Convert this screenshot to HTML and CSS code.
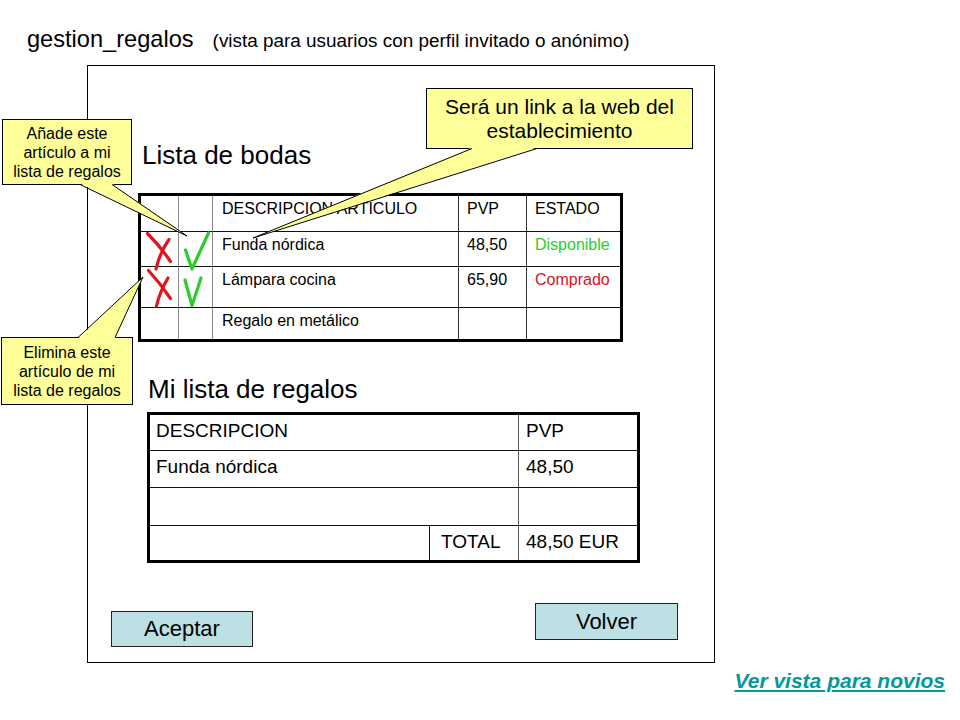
FILE: index.html
```html
<!DOCTYPE html>
<html lang="es">
<head>
<meta charset="utf-8">
<title>gestion_regalos</title>
<link rel="stylesheet" href="styles.css">
</head>
<body>
<div class="page">
  <header class="title-row">
    <span class="title">gestion_regalos</span>
    <span class="subtitle">(vista para usuarios con perfil invitado o anónimo)</span>
  </header>

  <main class="frame">
    <h2 class="section-title bodas-title">Lista de bodas</h2>
    <div class="wedding-table">
      <div class="cell mk b"></div><div class="cell mk b"></div><div class="cell desc b">DESCRIPCION ARTICULO</div><div class="cell num b">PVP</div><div class="cell num b last">ESTADO</div>
      <div class="cell mk b"></div><div class="cell mk b"></div><div class="cell desc b">Funda nórdica</div><div class="cell num b">48,50</div><div class="cell num b last ok">Disponible</div>
      <div class="cell mk b"></div><div class="cell mk b"></div><div class="cell desc b">Lámpara cocina</div><div class="cell num b">65,90</div><div class="cell num b last ko">Comprado</div>
      <div class="cell mk"></div><div class="cell mk"></div><div class="cell desc">Regalo en metálico</div><div class="cell num"></div><div class="cell num last"></div>
    </div>

    <h2 class="section-title mine-title">Mi lista de regalos</h2>
    <div class="mine-table">
      <div class="cell2 wide b">DESCRIPCION</div><div class="cell2 price b">PVP</div>
      <div class="cell2 wide b">Funda nórdica</div><div class="cell2 price b">48,50</div>
      <div class="cell2 wide b"></div><div class="cell2 price b"></div>
      <div class="cell2 blank"></div><div class="cell2 total">TOTAL</div><div class="cell2 price">48,50 EUR</div>
    </div>

    <div class="actions">
      <button class="btn btn-accept" type="button">Aceptar</button>
      <button class="btn btn-back" type="button">Volver</button>
    </div>
  </main>

  <div class="footer-link"><a href="#">Ver vista para novios</a></div>

  <div class="callout callout-add">Añade este<br>artículo a mi<br>lista de regalos</div>
  <div class="callout callout-remove">Elimina este<br>artículo de mi<br>lista de regalos</div>
  <div class="callout callout-link">Será un link a la web del<br>establecimiento</div>

  <svg class="overlay" width="960" height="720" viewBox="0 0 960 720">
    <g class="wedge">
      <polygon points="80,183.5 187,236 112,183.5"/>
      <polygon points="472,147.5 253,238 537,147.5"/>
      <polygon points="78,338.5 143,277 115,338.5"/>
    </g>
    <g class="wedge-edge">
      <line x1="80" y1="184.5" x2="187" y2="236"/>
      <line x1="112" y1="184.5" x2="187" y2="236"/>
      <line x1="472" y1="148.5" x2="253" y2="238"/>
      <line x1="537" y1="148.5" x2="253" y2="238"/>
      <line x1="78" y1="337.5" x2="143" y2="277"/>
      <line x1="115" y1="337.5" x2="143" y2="277"/>
    </g>
    <g class="cross">
      <path d="M147.5 233.5 Q160 246 170.5 261.5"/>
      <path d="M169 239.5 Q160 252 156 269"/>
      <path d="M148.5 270.5 Q160 283 170.5 298.5"/>
      <path d="M168 278 Q160 291 156.5 306"/>
    </g>
    <g class="check">
      <path d="M185.5 250 L192 269 L208.5 233"/>
      <path d="M185 280 L192 305.5 L201 278"/>
    </g>
  </svg>
</div>
</body>
</html>
```

FILE: styles.css
```css
* { box-sizing: border-box; }

html, body {
  margin: 0;
  padding: 0;
  background: #ffffff;
}

body {
  font-family: "Liberation Sans", Arial, Helvetica, sans-serif;
  color: #000;
}

.page {
  position: relative;
  width: 960px;
  height: 720px;
  overflow: hidden;
}

/* header */
.title-row {
  display: flex;
  align-items: baseline;
  padding: 26px 0 0 27px;
  height: 53px;
}

.title {
  font-size: 23.6px;
  line-height: 27px;
}

.subtitle {
  font-size: 18.9px;
  line-height: 27px;
  margin-left: 19px;
}

/* main frame */
.frame {
  margin: 12px 0 0 87px;
  width: 628px;
  height: 598px;
  border: 1px solid #000;
}

.section-title {
  margin: 0;
  font-weight: normal;
  font-size: 26px;
  line-height: 30px;
}

.bodas-title {
  margin-top: 74px;
  padding-left: 54px;
}

.mine-title {
  margin-top: 32px;
  padding-left: 60px;
}

/* wedding list table */
.wedding-table {
  display: grid;
  grid-template-columns: 38px 34px 246px 68px 93px;
  grid-template-rows: 36px 35px 41px 31px;
  width: 485px;
  margin: 23px 0 0 50px;
  border: 3px solid #000;
  font-size: 16px;
  line-height: 18px;
}

.cell {
  border-right: 1px solid #333;
  padding: 4px 0 0 8px;
  white-space: nowrap;
}

.cell.b { border-bottom: 1px solid #111; }
.cell.mk { border-right-color: #8a8a8a; }
.cell.desc { padding-left: 9px; }
.cell.last { border-right: none; }
.cell.ok { color: #2ccc2c; }
.cell.ko { color: #d4141c; }

/* my gift list table */
.mine-table {
  display: grid;
  grid-template-columns: 280px 89px 118px;
  grid-template-rows: 36px 37px 38px 34px;
  width: 493px;
  margin: 8px 0 0 59px;
  border: 3px solid #000;
  font-size: 19px;
  line-height: 22px;
}

.cell2 {
  padding: 4.5px 0 0 6px;
  white-space: nowrap;
}

.cell2.b { border-bottom: 1px solid #111; }
.cell2.wide { grid-column: span 2; border-right: 1px solid #555; }
.cell2.blank { border-right: 1px solid #111; }
.cell2.total { border-right: 1px solid #555; padding-left: 11px; }
.cell2.price { padding-left: 7px; }

/* buttons */
.actions {
  display: flex;
  justify-content: space-between;
  align-items: flex-start;
  margin-top: 40px;
  padding: 0 36px 0 23px;
}

.btn {
  font-family: "Liberation Sans", Arial, Helvetica, sans-serif;
  font-size: 22px;
  line-height: 24px;
  color: #000;
  background: #bde0e4;
  border: 1px solid #222;
  border-radius: 0;
  padding: 0;
  margin: 0;
}

.btn-accept {
  width: 142px;
  height: 36px;
  margin-top: 8px;
}

.btn-back {
  width: 143px;
  height: 37px;
}

/* footer link */
.footer-link {
  margin-top: 6px;
  padding-right: 15px;
  text-align: right;
  font-size: 21px;
  line-height: 24px;
  font-weight: bold;
  font-style: italic;
}

.footer-link a {
  color: #009a9a;
  text-decoration: underline;
}

/* callouts */
.callout {
  position: absolute;
  background: #ffff99;
  border: 1px solid #000;
  text-align: center;
  font-size: 16px;
  line-height: 19px;
}

.callout-add {
  left: 2px;
  top: 119px;
  width: 130px;
  height: 66px;
  padding-top: 4px;
}

.callout-remove {
  left: 1px;
  top: 337px;
  width: 132px;
  height: 68px;
  padding-top: 5px;
}

.callout-link {
  left: 426px;
  top: 88px;
  width: 267px;
  height: 61px;
  padding-top: 6px;
  font-size: 21px;
  line-height: 24px;
}

/* overlay drawing */
.overlay {
  position: absolute;
  left: 0;
  top: 0;
  pointer-events: none;
}

.wedge polygon {
  fill: #ffff99;
  stroke: none;
}

.wedge-edge line {
  stroke: #000;
  stroke-width: 1;
}

.cross path {
  fill: none;
  stroke: #e0141e;
  stroke-width: 3.2;
  stroke-linecap: round;
}

.check path {
  fill: none;
  stroke: #2ccc2c;
  stroke-width: 3.2;
  stroke-linecap: round;
  stroke-linejoin: round;
}
```
